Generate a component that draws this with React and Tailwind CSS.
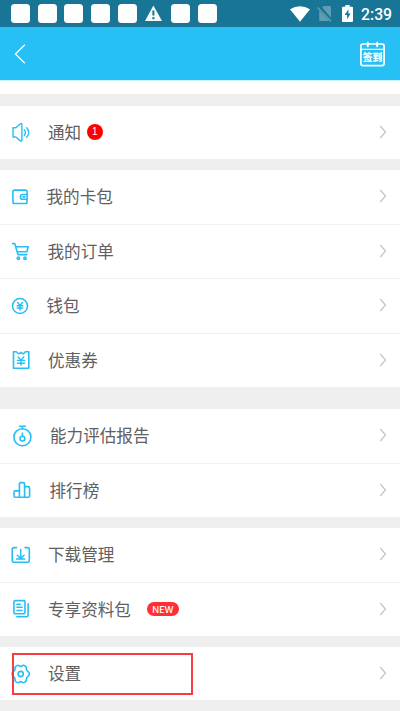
import React from 'react';

// Row icons share a 40x30 canvas that starts at the left edge of the row
const RowIcon = ({ children }) => (
    <svg
        viewBox="0 0 40 30"
        className="w-10 h-[30px] shrink-0 text-[#27bff3]"
        fill="none"
        stroke="currentColor"
        strokeWidth="1.6"
        strokeLinecap="round"
        strokeLinejoin="round"
    >
        {children}
    </svg>
);

const SpeakerIcon = () => (
    <RowIcon>
        <path d="M13 9.8h2.8L20.5 5.7q1.4-.7 1.4.7v15.8q0 1.4-1.4.7L15.8 19H13z" strokeWidth="1.4" />
        <path d="M24.3 11.7q2.2 2.9 0 5.8M26.7 9.8q4.2 4.8 0 9.4" strokeWidth="1.4" />
    </RowIcon>
);

const WalletIcon = () => (
    <RowIcon>
        <rect x="12.9" y="8.1" width="14.2" height="13.4" rx="1.8" />
        <path d="M27 12.5h-4.2a2.4 2.4 0 0 0 0 4.8H27M23 14.9h1.8" />
    </RowIcon>
);

const CartIcon = () => (
    <RowIcon>
        <path d="M12.6 7.6h2.2l3.1 11h9M15.6 10.7h12.6l-1.4 5h-9.5" />
        <circle cx="18.4" cy="22.2" r="1.2" />
        <circle cx="25" cy="22.2" r="1.2" />
    </RowIcon>
);

const MoneyIcon = () => (
    <RowIcon>
        <circle cx="20" cy="15" r="7.5" />
        <path d="M17.6 11.5l2.4 2.9 2.4-2.9M17.2 14.7h5.6M17.2 16.9h5.6M20 14.4v4.6" strokeWidth="1.5" />
    </RowIcon>
);

const CouponIcon = () => (
    <RowIcon>
        <path d="M13.5 6.8h2.4q1.3 0 1.7 1 1 1.6 2 .5l1.3-1 1.3 1q1.2 1.1 2-.5.4-1 1.7-1h2.9v16.4H13.5z" />
        <path d="M18.2 12l2.8 3.1 2.8-3.1M17.4 15.4h7.2M17.4 18.2h7.2M21 15.2v5" strokeWidth="1.4" />
    </RowIcon>
);

const StopwatchIcon = () => (
    <RowIcon>
        <circle cx="22.4" cy="16.2" r="8.5" />
        <path d="M19.5 5.2h5.8M22.4 5.2v2.4M22.4 12v3.3" />
        <circle cx="22.4" cy="17.6" r="2.4" />
    </RowIcon>
);

const RankIcon = () => (
    <RowIcon>
        <path d="M19.4 22.2h-4.2q-1.2 0-1.2-1.2v-3.9q0-1.2 1.2-1.2h4.2M24.6 11.6h3.6q1.4 0 1.4 1.4v7.8q0 1.4-1.4 1.4h-3.6" />
        <path d="M19.4 22.2V9q0-1.4 1.4-1.4h2.4q1.4 0 1.4 1.4v13.2z" />
    </RowIcon>
);

const DownloadIcon = () => (
    <RowIcon>
        <path d="M16.5 7.6h-2.3q-2 0-2 2v10.6q0 2 2 2h13.1q2 0 2-2V9.6q0-2-2-2H25" />
        <path d="M20.7 9.4v9.1M17.3 15.3l3.4 3.3 3.4-3.3M16.5 19h8.3" strokeWidth="1.5" />
    </RowIcon>
);

const FilesIcon = () => (
    <RowIcon>
        <path d="M15.5 6.6H24q1 0 1 1v11.2q0 1-1 1h-8.5q-1.6 0-1.6-1.8V8.4q0-1.8 1.6-1.8z" />
        <path d="M16.9 10.2h3.4M16.9 13.2h5.2M16.9 16.4h5.2" strokeWidth="1.5" />
        <path d="M28.1 9.8v11.5q0 1.5-1.5 1.5h-9.8" />
    </RowIcon>
);

const SettingsIcon = () => (
    <RowIcon>
        <path d="M16.8 6.6C18.3 5.8 19 6.4 19.5 7q1.2.8 2.4 0c.5-.6 1.2-1.2 2.7-.4 1.9 1 2 2.3 1.8 3.6q.1 1.3 1.2 2c1 .7 1.8 1.6 1.8 2.8s-.8 2.1-1.8 2.8q-1.1.7-1.2 2c.2 1.3.1 2.6-1.8 3.6-1.5.8-2.2.2-2.7-.4q-1.2-.8-2.4 0c-.5.6-1.2 1.2-2.7.4-1.9-1-2-2.3-1.8-3.6q-.1-1.3-1.2-2c-1-.7-1.8-1.6-1.8-2.8s.8-2.1 1.8-2.8q1.1-.7 1.2-2c-.2-1.3-.1-2.6 1.8-3.6z" />
        <circle cx="20.7" cy="15" r="2.6" />
    </RowIcon>
);

const groups = [
    {
        height: 'h-[53px]',
        gap: 'mt-3',
        rows: [{ label: '通知', Icon: SpeakerIcon, indent: 'ml-2', badge: 'count' }],
    },
    {
        height: 'h-[217px]',
        gap: 'mt-[11px]',
        rows: [
            { label: '我的卡包', Icon: WalletIcon, indent: 'ml-[6.5px]' },
            { label: '我的订单', Icon: CartIcon, indent: 'ml-[7.5px]' },
            { label: '钱包', Icon: MoneyIcon, indent: 'ml-[6.5px]' },
            { label: '优惠券', Icon: CouponIcon, indent: 'ml-2' },
        ],
    },
    {
        height: 'h-[108px]',
        gap: 'mt-[22px]',
        rows: [
            { label: '能力评估报告', Icon: StopwatchIcon, indent: 'ml-2.5' },
            { label: '排行榜', Icon: RankIcon, indent: 'ml-[9.5px]' },
        ],
    },
    {
        height: 'h-[108px]',
        gap: 'mt-[11px]',
        rows: [
            { label: '下载管理', Icon: DownloadIcon, indent: 'ml-2' },
            { label: '专享资料包', Icon: FilesIcon, indent: 'ml-2', badge: 'new' },
        ],
    },
    {
        height: 'h-[53px]',
        gap: 'mt-[11px]',
        rows: [{ label: '设置', Icon: SettingsIcon, indent: 'ml-2', highlighted: true }],
    },
];

const Row = ({ label, Icon, indent, badge, highlighted }) => (
    <li className="relative flex flex-1 items-center">
        <Icon />
        <span className={`pt-[2.5px] text-[16.6px] leading-6 text-[#606060] ${indent}`}>{label}</span>
        {badge === 'count' && (
            <span className="mb-px ml-[5.6px] flex size-4 items-center justify-center rounded-full bg-[#ff0000] text-[10px] leading-none text-white">
                1
            </span>
        )}
        {badge === 'new' && (
            <span className="ml-4 flex h-3.5 w-8 items-center justify-center rounded-full bg-[#ff3033] font-['Inter','Liberation_Sans',sans-serif] text-[9px] font-medium leading-none text-white">
                NEW
            </span>
        )}
        <svg viewBox="0 0 8 14" className="mb-px ml-auto mr-[13px] h-3.5 w-2 shrink-0" fill="none" stroke="#c6c6c6" strokeWidth="1.3">
            <path d="M1.3 1l5.2 6-5.2 6" />
        </svg>
        {highlighted && <div className="absolute left-3 top-[6px] h-[42px] w-[181px] border-2 border-[#f5282c]/90" />}
    </li>
);

const StatusBar = () => (
    <div className="flex h-[27px] items-center bg-[#187595] pl-[11px] pr-2 text-white">
        <div className="flex items-center gap-[7.7px]">
            {[0, 1, 2, 3, 4].map((i) => (
                <span key={i} className="h-[19px] w-[19px] rounded-[3.5px] bg-[#fdfefe]" />
            ))}
            <svg viewBox="0 0 19 19" className="size-[19px]">
                <path d="M9.4 1.5L18 17H1z" fill="#f4f9fa" />
                <path d="M9.4 6.5v5M9.4 13v2.2" stroke="#187595" strokeWidth="2" />
            </svg>
            <span className="h-[19px] w-[19px] rounded-[3.5px] bg-[#fdfefe]" />
            <span className="h-[19px] w-[19px] rounded-[3.5px] bg-[#fdfefe]" />
        </div>
        <svg viewBox="0 0 20 16" className="ml-auto h-4 w-5">
            <path d="M0 3.2Q10-2.7 20 3.2L10 15.8z" fill="#fff" />
        </svg>
        <svg viewBox="0 0 16 17" className="ml-[7px] h-[17px] w-4">
            <path d="M6.8 1H13q1 0 1 1v10.8L5.2 2.6z" fill="#5d9eb4" />
            <path d="M2.2 5.6L12.4 16H3.2q-1 0-1-1z" fill="#5d9eb4" />
            <path d="M.6 2.6L14 16.2" stroke="#5d9eb4" strokeWidth="1.4" />
        </svg>
        <svg viewBox="0 0 11 17" className="ml-[9px] h-[17px] w-[11px]">
            <path d="M3.3 0h4.4v1.7H10q1 0 1 1V16q0 1-1 1H1q-1 0-1-1V2.7q0-1 1-1h2.3z" fill="#fff" />
            <path d="M6.5 4.3L2.7 10h2.4v4.3l3.5-5.7H6.3z" fill="#187595" />
        </svg>
        <span className="ml-2 w-[31px] whitespace-nowrap pt-0.5 font-['Roboto','Liberation_Sans',sans-serif] text-[15.8px] font-medium leading-none">
            2:39
        </span>
    </div>
);

const Header = () => (
    <header className="flex h-[53px] items-center justify-between bg-[#27c0f4] pl-[14px] pr-[14px]">
        <svg viewBox="0 0 12 20" className="h-5 w-3" fill="none" stroke="#fff" strokeWidth="1.2">
            <path d="M10.8 .7L1.4 10l9.4 9.3" />
        </svg>
        <svg viewBox="0 0 27 26" className="h-[26px] w-[27px]" fill="none" stroke="#fff" strokeWidth="1.7" strokeLinecap="round">
            <rect x="1.9" y="3" width="23.2" height="21.6" rx="2" />
            <path d="M2.1 8.4H25" strokeWidth="1.2" />
            <path d="M8.8 1.8v3.4M18.2 1.8v3.4" strokeWidth="2" />
            <text
                x="13.5"
                y="20"
                textAnchor="middle"
                fill="#fff"
                stroke="none"
                className="font-['Noto_Sans_CJK_SC',sans-serif] text-[9.8px] font-black"
            >
                签到
            </text>
        </svg>
    </header>
);

const App = () => (
    <div className="flex h-[711px] w-[400px] flex-col overflow-hidden bg-[#efefef] font-['Liberation_Sans','Noto_Sans_CJK_SC',sans-serif]">
        <StatusBar />
        <Header />
        <div className="h-3.5 shrink-0 border-t border-[#c9effc] bg-white" />
        {groups.map((group) => (
            <ul
                key={group.rows[0].label}
                className={`flex shrink-0 flex-col divide-y divide-[#f0f0f0] bg-white ${group.height} ${group.gap}`}
            >
                {group.rows.map((row) => (
                    <Row key={row.label} {...row} />
                ))}
            </ul>
        ))}
    </div>
);

export default App;
